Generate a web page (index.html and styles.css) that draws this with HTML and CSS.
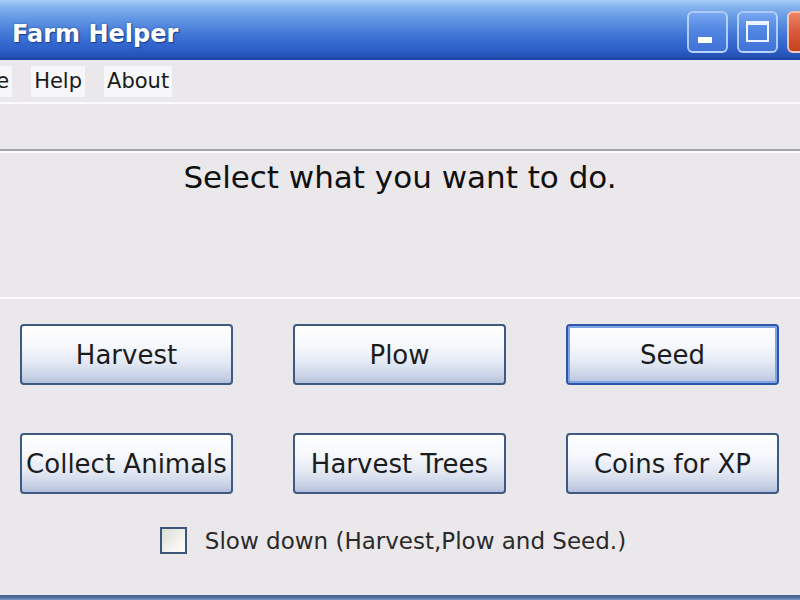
FILE: index.html
```html
<!DOCTYPE html>
<html lang="en">
<head>
<meta charset="utf-8">
<title>Farm Helper</title>
<link rel="stylesheet" href="styles.css">
</head>
<body>
<div class="window">
  <header class="titlebar">
    <span class="title">Farm Helper</span>
    <div class="controls">
      <span class="ctl ctl-min"><span class="glyph-min"></span></span>
      <span class="ctl ctl-max"><span class="glyph-max"></span></span>
      <span class="ctl ctl-close">
        <svg class="glyph-close" viewBox="0 0 20 20" width="20" height="20" aria-hidden="true">
          <path d="M4 4 L16 16 M16 4 L4 16" stroke="#ffffff" stroke-width="3.2" stroke-linecap="round" fill="none"/>
        </svg>
      </span>
    </div>
  </header>
  <nav class="menubar">
    <span class="menu-item">File</span>
    <span class="menu-item">Help</span>
    <span class="menu-item">About</span>
  </nav>
  <div class="toolbar"></div>
  <section class="prompt">
    <h1 class="prompt-text">Select what you want to do.</h1>
  </section>
  <section class="actions">
    <div class="button-grid">
      <button class="xp-btn">Harvest</button>
      <button class="xp-btn">Plow</button>
      <button class="xp-btn is-default">Seed</button>
      <button class="xp-btn">Collect Animals</button>
      <button class="xp-btn">Harvest Trees</button>
      <button class="xp-btn">Coins for XP</button>
    </div>
    <label class="option">
      <span class="checkbox"></span>
      <span class="option-text">Slow down (Harvest,Plow and Seed.)</span>
    </label>
  </section>
  <div class="frame-bottom"></div>
</div>
</body>
</html>
```

FILE: styles.css
```css
html, body {
  margin: 0;
  padding: 0;
  width: 800px;
  height: 600px;
  overflow: hidden;
  background: #ebe8eb;
}

.window {
  width: 800px;
  height: 600px;
  display: flex;
  flex-direction: column;
  overflow: hidden;
  background: #ebe8eb;
}

/* Luna title bar */
.titlebar {
  height: 60px;
  flex: none;
  display: flex;
  align-items: center;
  justify-content: space-between;
  padding-left: 12px;
  background: linear-gradient(to bottom,
    #a9cdf6 0%, #84b2ee 12%, #5d92e2 35%, #3f74d6 60%, #2d5fc8 82%, #2452b6 94%, #1c429c 100%);
}

.title {
  font-family: "DejaVu Sans", "Liberation Sans", sans-serif;
  font-weight: bold;
  font-size: 24px;
  color: #ffffff;
  text-shadow: 1px 1px 1px #1a3d8a, 0 0 2px rgba(20, 50, 120, 0.6);
  padding-top: 8px;
}

.controls {
  display: flex;
  gap: 9px;
  margin-right: -28px;
  padding-top: 3px;
}

.ctl {
  width: 37px;
  height: 38px;
  border: 2px solid rgba(200, 222, 255, 0.8);
  border-radius: 6px;
  background: linear-gradient(to bottom, #78a6f0 0%, #5186e2 45%, #3f71d6 100%);
  display: flex;
  align-items: center;
  justify-content: center;
  box-sizing: content-box;
  position: relative;
}

.ctl-min {
  align-items: flex-end;
  justify-content: flex-start;
}

.ctl-close {
  background: linear-gradient(to bottom, #ec8466 0%, #d9583a 50%, #c4431f 100%);
  border-color: rgba(255, 220, 210, 0.8);
}

.glyph-min {
  width: 14px;
  height: 6px;
  background: #ffffff;
  margin: 0 0 8px 9px;
}

.glyph-max {
  width: 23px;
  height: 21px;
  border: 2px solid #eef4ff;
  border-top-width: 4px;
  box-sizing: border-box;
}

/* menu bar */
.menubar {
  height: 42px;
  flex: none;
  display: flex;
  align-items: center;
  gap: 19px;
  margin-left: -29px;
  border-bottom: 2px solid #fbfbfd;
  font-family: "DejaVu Sans", "Liberation Sans", sans-serif;
  font-size: 21px;
  color: #1a1a1a;
}

.menu-item {
  background: #f7f6f8;
  padding: 3px 3px 4px;
}

.toolbar {
  height: 45px;
  flex: none;
  border-bottom: 2px solid #a4a3a8;
  box-shadow: 0 2px 0 #fafafc;
}

/* prompt label */
.prompt {
  height: 146px;
  flex: none;
  border-bottom: 2px solid #fbfbfd;
  display: flex;
  justify-content: center;
  align-items: flex-start;
}

.prompt-text {
  margin: 8px 0 0;
  font-family: "Comic Sans MS", "DejaVu Sans", sans-serif;
  font-weight: normal;
  font-size: 31px;
  color: #101010;
}

/* action buttons */
.actions {
  flex: 1;
  display: flex;
  flex-direction: column;
  padding: 25px 22px 0 20px;
}

.button-grid {
  display: grid;
  grid-template-columns: repeat(3, 213px);
  grid-auto-rows: 61px;
  column-gap: 60px;
  row-gap: 48px;
}

.xp-btn {
  margin: 0;
  padding: 0;
  border: 2px solid #3f5a80;
  border-radius: 4px;
  background: linear-gradient(to bottom, #ffffff 0%, #f6f8fc 35%, #e2e8f3 65%, #c6d0e5 90%, #b3c0dc 100%);
  font-family: "Comic Sans MS", "DejaVu Sans", sans-serif;
  font-size: 26px;
  color: #1c1c1c;
  white-space: nowrap;
  overflow: hidden;
}

.xp-btn.is-default {
  border-color: #2f55a8;
  box-shadow: inset 0 0 0 2px #7ea4e6;
}

.option {
  display: flex;
  align-items: center;
  justify-content: center;
  gap: 18px;
  margin-top: 33px;
  margin-left: -12px;
  font-family: "Comic Sans MS", "DejaVu Sans", sans-serif;
  font-size: 23px;
  color: #2a2a2a;
}

.checkbox {
  width: 23px;
  height: 23px;
  border: 2px solid #3b5679;
  background: linear-gradient(135deg, #dcdcd6 0%, #f2f2ee 60%, #ffffff 100%);
}

.frame-bottom {
  height: 5px;
  flex: none;
  background: linear-gradient(to bottom, #4a6694 0%, #4a6694 40%, #7d9bd0 100%);
}
```
